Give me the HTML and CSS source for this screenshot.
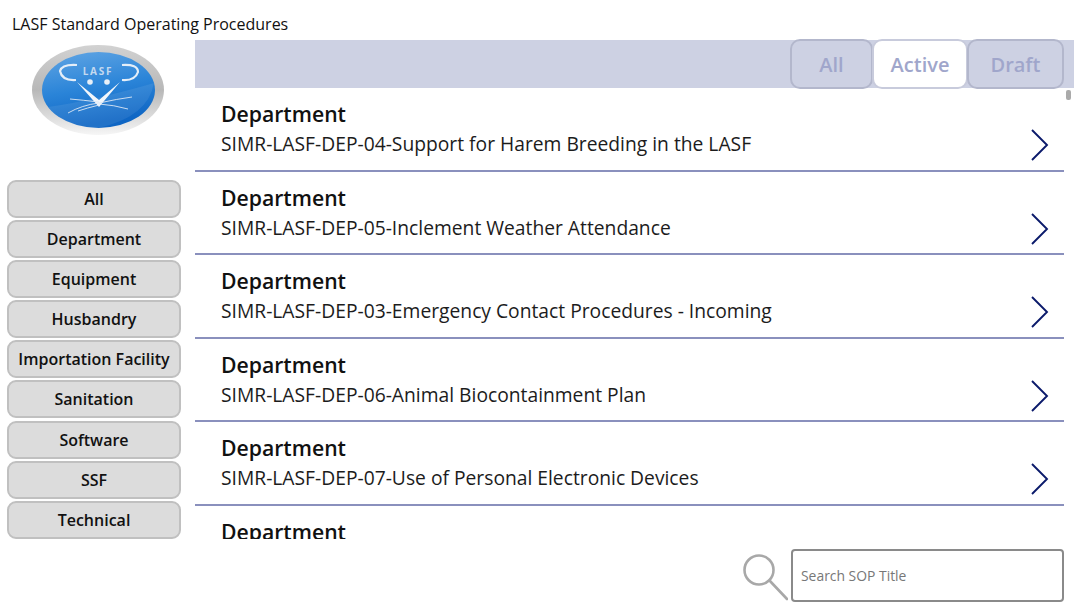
FILE: index.html
```html
<!DOCTYPE html>
<html>
<head>
    <meta charset="utf-8">
    <title>LASF Standard Operating Procedures</title>
    <link rel="stylesheet" href="styles.css">
</head>
<body>
    <div class="title">LASF Standard Operating Procedures</div>
    <div class="main">
        <div class="side">
            <svg class="logo" width="132" height="90" viewBox="0 0 132 90">
                <defs>
                    <linearGradient id="ring" x1="0" y1="0" x2="0" y2="1">
                        <stop offset="0" stop-color="#d2d2d2"/>
                        <stop offset="0.5" stop-color="#b8b8b8"/>
                        <stop offset="0.8" stop-color="#dcdcdc"/>
                        <stop offset="1" stop-color="#f6f6f6"/>
                    </linearGradient>
                    <linearGradient id="blue" x1="0" y1="0" x2="0.25" y2="1">
                        <stop offset="0" stop-color="#62a6e4"/>
                        <stop offset="0.55" stop-color="#2a84d8"/>
                        <stop offset="1" stop-color="#0f66c4"/>
                    </linearGradient>
                </defs>
                <ellipse cx="66" cy="45" rx="66" ry="45" fill="url(#ring)"/>
                <ellipse cx="66.5" cy="45" rx="56.5" ry="38" fill="url(#blue)"/>
                <path d="M16 62 Q60 56 122 38 Q116 72 66 83 Q32 82 16 62Z" fill="#fff" opacity=".08"/>
                <path d="M45 20 Q30 19 28 26 Q30 36 44 35" fill="none" stroke="#e4eef8" stroke-width="2.2"/>
                <path d="M90 20 Q106 19 106 27 Q103 36 90 35" fill="none" stroke="#e4eef8" stroke-width="2.2"/>
                <text x="66" y="30" class="logo-text">LASF</text>
                <circle cx="58" cy="37" r="2.8" fill="#e8f0f8"/>
                <circle cx="75" cy="37" r="2.8" fill="#e8f0f8"/>
                <path d="M45 37 L67 62 L88 37 L67 55Z" fill="#f2f6fb"/>
                <path d="M67 58 Q50 60 36 68 M67 57 Q50 55 38 54 M67 58 Q85 54 100 52 M67 59 Q82 60 96 64 M67 60 Q55 63 46 66" fill="none" stroke="#dce8f5" stroke-width=".9"/>
            </svg>
            <div class="filters">
                <button class="filter">All</button>
                <button class="filter">Department</button>
                <button class="filter">Equipment</button>
                <button class="filter">Husbandry</button>
                <button class="filter">Importation Facility</button>
                <button class="filter">Sanitation</button>
                <button class="filter">Software</button>
                <button class="filter">SSF</button>
                <button class="filter">Technical</button>
            </div>
        </div>
        <div class="right">
            <div class="tabbar">
                <button class="tab tab-all">All</button>
                <button class="tab tab-active">Active</button>
                <button class="tab tab-draft">Draft</button>
            </div>
            <div class="list">
                <div class="row">
                    <div class="row-text">
                        <div class="row-head">Department</div>
                        <div class="row-name">SIMR-LASF-DEP-04-Support for Harem Breeding in the LASF</div>
                    </div>
                    <svg class="chev" width="20" height="32" viewBox="0 0 20 32"><path d="M2 1 L17 16 L2 31" fill="none" stroke="#0b1a6b" stroke-width="1.9"/></svg>
                </div>
                <div class="row">
                    <div class="row-text">
                        <div class="row-head">Department</div>
                        <div class="row-name">SIMR-LASF-DEP-05-Inclement Weather Attendance</div>
                    </div>
                    <svg class="chev" width="20" height="32" viewBox="0 0 20 32"><path d="M2 1 L17 16 L2 31" fill="none" stroke="#0b1a6b" stroke-width="1.9"/></svg>
                </div>
                <div class="row">
                    <div class="row-text">
                        <div class="row-head">Department</div>
                        <div class="row-name">SIMR-LASF-DEP-03-Emergency Contact Procedures - Incoming</div>
                    </div>
                    <svg class="chev" width="20" height="32" viewBox="0 0 20 32"><path d="M2 1 L17 16 L2 31" fill="none" stroke="#0b1a6b" stroke-width="1.9"/></svg>
                </div>
                <div class="row">
                    <div class="row-text">
                        <div class="row-head">Department</div>
                        <div class="row-name">SIMR-LASF-DEP-06-Animal Biocontainment Plan</div>
                    </div>
                    <svg class="chev" width="20" height="32" viewBox="0 0 20 32"><path d="M2 1 L17 16 L2 31" fill="none" stroke="#0b1a6b" stroke-width="1.9"/></svg>
                </div>
                <div class="row">
                    <div class="row-text">
                        <div class="row-head">Department</div>
                        <div class="row-name">SIMR-LASF-DEP-07-Use of Personal Electronic Devices</div>
                    </div>
                    <svg class="chev" width="20" height="32" viewBox="0 0 20 32"><path d="M2 1 L17 16 L2 31" fill="none" stroke="#0b1a6b" stroke-width="1.9"/></svg>
                </div>
                <div class="row">
                    <div class="row-text">
                        <div class="row-head">Department</div>
                    </div>
                </div>
                <div class="scroll-thumb"></div>
            </div>
            <div class="search">
                <svg class="search-icon" width="46" height="48" viewBox="0 0 46 48"><circle cx="17" cy="17" r="14.5" fill="none" stroke="#a8a8a8" stroke-width="2.6"/><path d="M27.5 27.5 L45 46" fill="none" stroke="#a8a8a8" stroke-width="2.6" stroke-linecap="round"/></svg>
                <input class="search-box" type="text" placeholder="Search SOP Title">
            </div>
        </div>
    </div>
</body>
</html>
```

FILE: styles.css
```css
html,body,div{
    padding: 0;
    margin: 0;
}
body{
    width: 1080px;
    height: 605px;
    overflow: hidden;
    background-color: #fff;
    font-family: "Open Sans", "Liberation Sans", sans-serif;
    color: #111;
}
.title{
    height: 39px;
    padding: 13px 0 0 12px;
    box-sizing: border-box;
    font-size: 16px;
    line-height: 22px;
}
.main{
    display: flex;
}
.side{
    width: 195px;
    flex: none;
}
.logo{
    display: block;
    margin: 6px 0 0 32px;
}
.logo-text{
    font-family: "Open Sans", sans-serif;
    font-size: 10px;
    font-weight: 700;
    letter-spacing: 1.8px;
    fill: #c4d9ef;
    text-anchor: middle;
}
.filters{
    display: flex;
    flex-direction: column;
    gap: 2.1px;
    margin: 45px 0 0 7px;
    width: 174px;
}
.filter{
    height: 38px;
    padding: 0;
    border: 2px solid #c0c0c0;
    border-radius: 9px;
    background-color: #dcdcdc;
    font-family: inherit;
    font-size: 16px;
    font-weight: 600;
    color: #111;
}
.right{
    width: 879px;
    flex: none;
}
.tabbar{
    display: flex;
    justify-content: flex-end;
    height: 48px;
    margin-top: 1px;
    padding-right: 10px;
    background-color: #cdd1e3;
}
.tab{
    height: 50px;
    margin-top: -1px;
    padding: 0;
    border: 2px solid #b3b7cc;
    border-radius: 10px;
    background-color: #cdd1e3;
    font-family: inherit;
    font-size: 20px;
    font-weight: 600;
    color: #a0a6cb;
}
.tab-all{
    width: 83px;
}
.tab-active{
    width: 96px;
    margin-left: -1px;
    background-color: #fff;
    border-color: #c8cbdc;
}
.tab-draft{
    width: 97px;
    margin-left: -1px;
}
.list{
    position: relative;
    height: 451px;
    width: 879px;
    overflow: hidden;
}
.row{
    display: flex;
    align-items: flex-start;
    width: 869px;
    height: 83.5px;
    box-sizing: border-box;
    padding: 11px 14px 0 26px;
    border-bottom: 2px solid #8a90bd;
}
.row-text{
    flex: 1;
}
.row-head{
    font-size: 21.2px;
    line-height: 30px;
    font-weight: 600;
    color: #111;
}
.row-name{
    font-size: 19.25px;
    line-height: 30px;
    color: #1c1c1c;
}
.chev{
    margin-top: 30px;
}
.scroll-thumb{
    position: absolute;
    left: 871px;
    top: 2px;
    width: 5px;
    height: 10px;
    border-radius: 2px;
    background-color: #aaa;
}
.search{
    display: flex;
    justify-content: flex-end;
    align-items: flex-start;
    padding: 10px 10px 0 0;
}
.search-icon{
    margin: 4px 3px 0 0;
}
.search-box{
    width: 273px;
    height: 53px;
    box-sizing: border-box;
    padding: 0 8px;
    border: 2px solid #8a8a8a;
    border-radius: 4px;
    font-family: inherit;
    font-size: 13.9px;
    outline: none;
}
.search-box::placeholder{
    color: #777;
}
```
